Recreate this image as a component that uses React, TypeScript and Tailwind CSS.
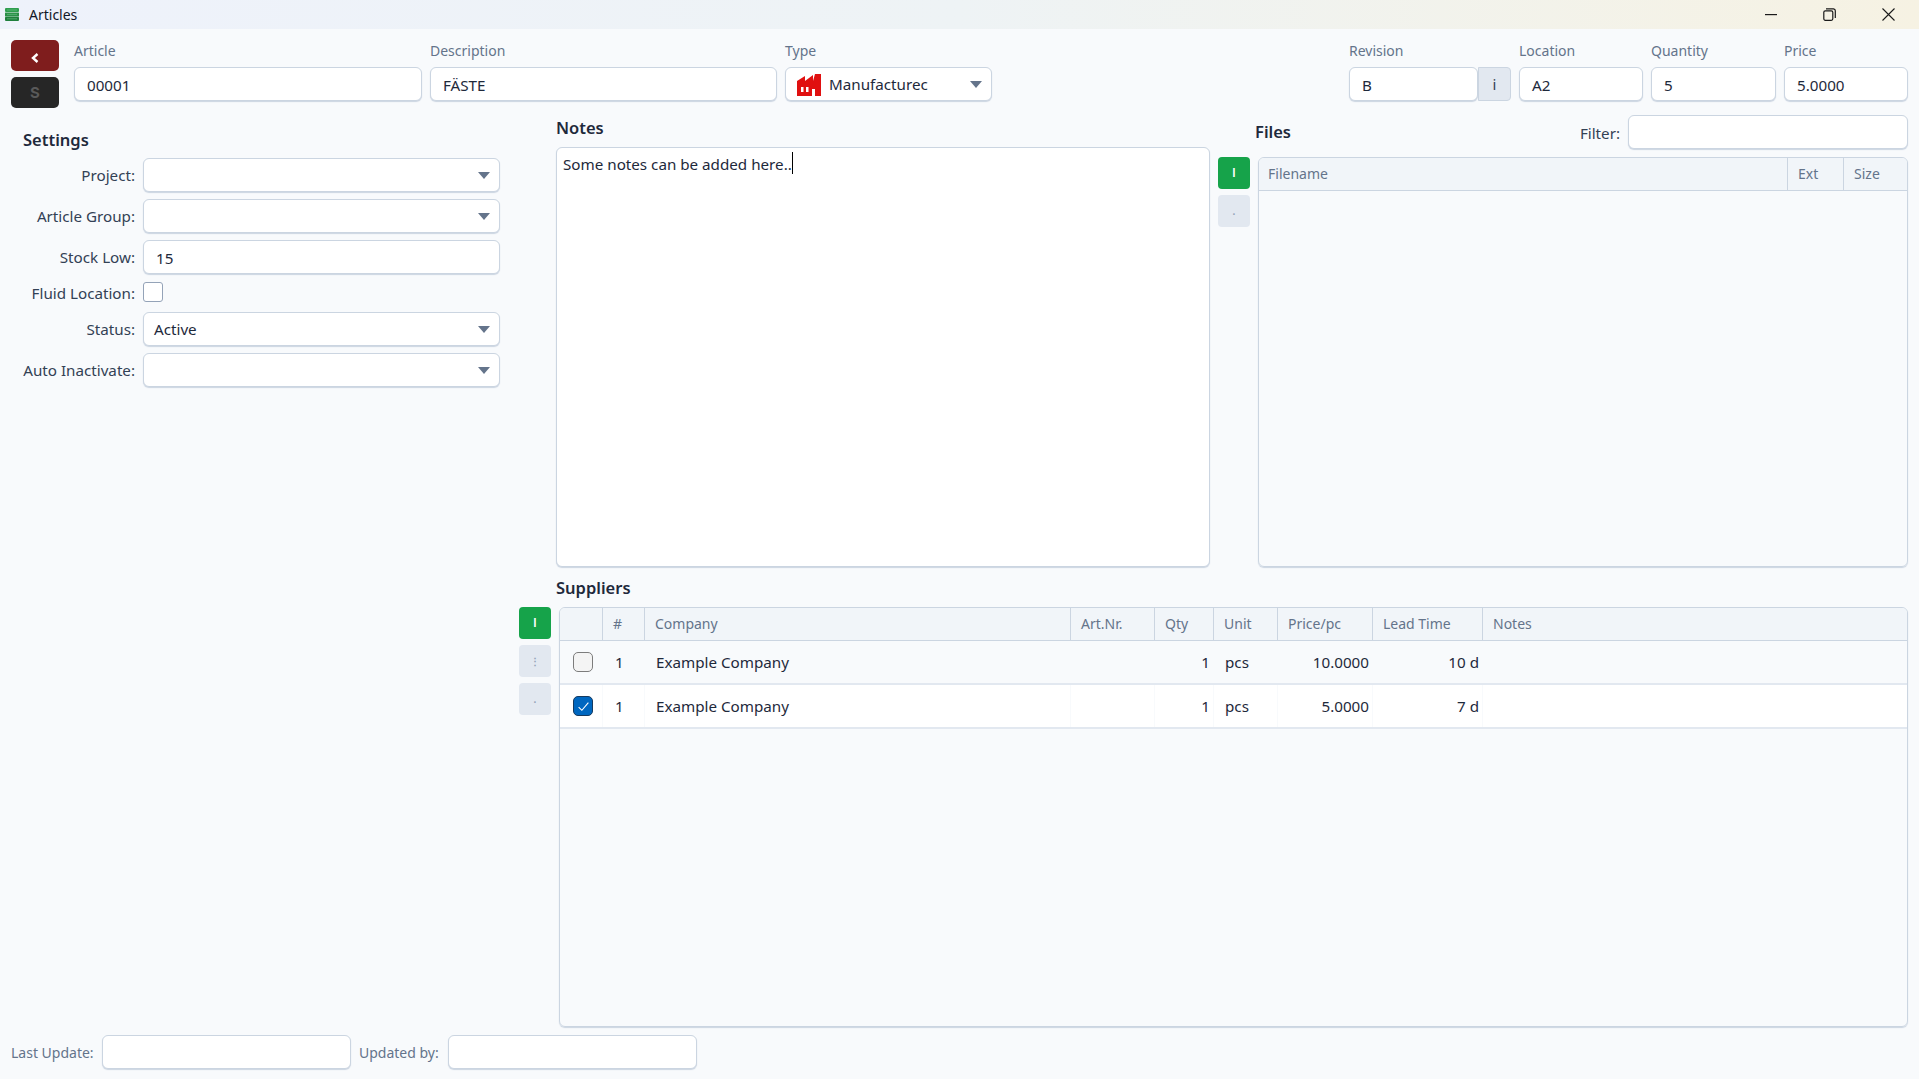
import React from "react";

const font = "font-['Noto_Sans',sans-serif]";

function Field({ value, className = "" }: { value?: string; className?: string }) {
  return (
    <div className={`flex h-[34px] items-center rounded-md border border-[#cbd5e1] bg-white pl-[12px] pt-[2px] text-[15.2px] text-[#1e293b] shadow-[0_1px_1px_#cbd5e1] ${className}`}>
      {value}
    </div>
  );
}

function Caret() {
  return <div className="ml-auto mr-[9px] h-0 w-0 border-x-[6.5px] border-t-[7px] border-x-transparent border-t-[#64748b]" />;
}

function Select({ value }: { value?: string }) {
  return (
    <div className="flex h-[34px] w-[357px] items-center rounded-md border border-[#cbd5e1] bg-white pl-[10px] text-[15.2px] text-[#1e293b] shadow-[0_1px_1px_#cbd5e1]">
      {value}
      <Caret />
    </div>
  );
}

function TopField({ label, value, className }: { label: string; value?: string; className: string }) {
  return (
    <div className={`flex flex-col ${className}`}>
      <div className="h-[27px] text-[14px] leading-[22px] text-[#64748b]">{label}</div>
      <Field value={value} />
    </div>
  );
}

function SettingRow({ label, children, className = "" }: { label: string; children: React.ReactNode; className?: string }) {
  return (
    <div className={`flex items-center ${className}`}>
      <div className="w-[135px] text-right text-[15.2px] text-[#334155]">{label}</div>
      <div className="ml-[8px]">{children}</div>
    </div>
  );
}

function SideButton({ text, green }: { text: string; green?: boolean }) {
  return (
    <div className={`flex h-[32px] w-[32px] items-center justify-center rounded-[4px] font-['Inter',sans-serif] ${green ? "bg-[#16a34a] text-[12px] font-semibold text-white" : "bg-[#e2e8f0] text-[10px] font-bold text-[#94a3b8]"}`}>
      {text}
    </div>
  );
}

function Th({ label, last, className = "pl-[10px]" }: { label?: string; last?: boolean; className?: string }) {
  return (
    <div className={`flex items-center pb-[1px] text-[14px] text-[#64748b] ${className} ${last ? "" : "border-r border-[#cbd5e1]"}`}>
      {label}
    </div>
  );
}

function Td({ children, right }: { children?: React.ReactNode; right?: boolean }) {
  return (
    <div className={`flex items-center border-r border-[#f8fafc] text-[15.2px] text-[#1e293b] ${right ? "justify-end pr-[3px]" : ""}`}>
      {children}
    </div>
  );
}

const supplierCols = "grid grid-cols-[43px_42px_426px_84px_59px_64px_95px_110px_1fr]";

function SupplierRow({ checked, price, lead }: { checked?: boolean; price: string; lead: string }) {
  return (
    <div className={`${supplierCols} h-[44px] border-b-2 border-[#e2e8f0] ${checked ? "bg-white" : ""}`}>
      <Td>
        {checked ? (
          <div className="ml-[13px] flex h-[20px] w-[20px] items-center justify-center rounded-[5px] border-[1.5px] border-[#163a5f] bg-[#0067c0]">
            <svg viewBox="0 0 12 12" className="h-[13px] w-[13px]">
              <path d="M1.5 6.5 L4.5 9.5 L10.5 2.5" fill="none" stroke="white" strokeWidth="1" />
            </svg>
          </div>
        ) : (
          <div className="ml-[13px] h-[20px] w-[20px] rounded-[5px] border-[1.5px] border-[#7c7c7c] bg-[#f4f4f4]" />
        )}
      </Td>
      <Td><span className="pl-[12px]">1</span></Td>
      <Td><span className="pl-[11px]">Example Company</span></Td>
      <Td />
      <Td right>1</Td>
      <Td><span className="pl-[11px]">pcs</span></Td>
      <Td right>{price}</Td>
      <Td right>{lead}</Td>
      <div />
    </div>
  );
}

export default function App() {
  return (
    <div className={`flex h-[1079px] w-[1919px] flex-col overflow-hidden bg-[#f8fafc] ${font}`}>
      {/* title bar */}
      <div className="flex h-[29px] items-center bg-gradient-to-r from-[#eef2fb] via-[#eef3f5] to-[#f6f2e3]">
        <svg viewBox="0 0 14 13" className="ml-[5px] h-[13px] w-[14px]">
          <rect x="0" y="0" width="14" height="4.1" rx="1" fill="#2f9e4f" />
          <rect x="0" y="4.4" width="14" height="4.1" rx="0.5" fill="#2a8f47" />
          <rect x="0" y="8.8" width="14" height="4.1" rx="1" fill="#1f7f3c" />
          <path d="M2 2 H12 M2 6.4 H12 M2 10.8 H12" stroke="#6cc48a" strokeWidth="0.6" />
        </svg>
        <div className="ml-[10px] text-[14px] text-[#111827]">Articles</div>
        <svg viewBox="0 0 12 2" className="ml-auto h-[2px] w-[12px]">
          <rect width="12" height="1.2" fill="#1a1a1a" />
        </svg>
        <svg viewBox="0 0 13 13" className="ml-[46px] h-[13px] w-[13px]" fill="none" stroke="#1a1a1a" strokeWidth="1.2">
          <rect x="0.8" y="2.8" width="9" height="9.5" rx="1.5" />
          <path d="M3 0.8 H10.5 A2 2 0 0 1 12.3 2.8 V10" />
        </svg>
        <svg viewBox="0 0 13 13" className="ml-[46px] mr-[24px] h-[13px] w-[13px]" stroke="#1a1a1a" strokeWidth="1.1">
          <path d="M0.5 0.5 L12.5 12.5 M12.5 0.5 L0.5 12.5" />
        </svg>
      </div>

      {/* article header */}
      <div className="flex h-[79px] pl-[11px] pt-[11px]">
        <div className="flex w-[48px] flex-col gap-[6px]">
          <div className="flex h-[31px] items-center justify-center rounded-[5px] bg-[#7f1d1d]">
            <svg viewBox="0 0 8 10" className="mt-[4px] h-[10px] w-[8px]">
              <path d="M6.5 1 L2 5 L6.5 9" fill="none" stroke="white" strokeWidth="2.4" />
            </svg>
          </div>
          <div className="flex h-[31px] items-center justify-center rounded-[5px] bg-[#262626] pt-[2px] font-['Inter',sans-serif] text-[15px] font-bold text-[#595959]">S</div>
        </div>
        <TopField label="Article" value="00001" className="ml-[15px] w-[348px]" />
        <TopField label="Description" value="FÄSTE" className="ml-[8px] w-[347px]" />
        <div className="ml-[8px] flex w-[207px] flex-col">
          <div className="h-[27px] text-[14px] leading-[22px] text-[#64748b]">Type</div>
          <div className="flex h-[34px] items-center rounded-md border border-[#cbd5e1] bg-white pl-[11px] text-[15.2px] text-[#1e293b] shadow-[0_1px_1px_#cbd5e1]">
            <svg viewBox="0 0 24 22" className="mt-[1px] h-[22px] w-[24px]">
              <path fillRule="evenodd" fill="#e01010" d="M0 22 V7 L8 2 V7 L16 1 V7 L18 0 H24 V22 H18 V15 H15 V22 Z M4 13 V18 H6.5 V13 Z M9 13 V18 H11.5 V13 Z" />
            </svg>
            <span className="ml-[8px] whitespace-nowrap">Manufacturec</span>
            <Caret />
          </div>
        </div>
        <div className="ml-[357px] flex w-[129px] flex-col">
          <div className="h-[27px] text-[14px] leading-[22px] text-[#64748b]">Revision</div>
          <Field value="B" />
        </div>
        <div className="mt-[27px] flex h-[34px] w-[33px] items-center justify-center rounded-r-[4px] border border-[#cbd5e1] bg-[#e2e8f0] text-[15px] text-[#334155]">i</div>
        <TopField label="Location" value="A2" className="ml-[8px] w-[124px]" />
        <TopField label="Quantity" value="5" className="ml-[8px] w-[125px]" />
        <TopField label="Price" value="5.0000" className="ml-[8px] w-[124px]" />
      </div>

      <div className="flex min-h-0 flex-1">
        {/* settings */}
        <div className="flex w-[519px] flex-col">
          <div className="ml-[23px] mt-[20px] h-[30px] text-[16.5px] font-semibold leading-[24px] text-[#1e293b]">Settings</div>
          <div className="flex flex-col gap-[7px]">
            <SettingRow label="Project:"><Select /></SettingRow>
            <SettingRow label="Article Group:"><Select /></SettingRow>
            <SettingRow label="Stock Low:"><Field value="15" className="w-[357px]" /></SettingRow>
            <SettingRow label="Fluid Location:" className="h-[24px]">
              <div className="mb-[2px] h-[20px] w-[20px] rounded-[3px] border border-[#94a3b8] bg-white" />
            </SettingRow>
            <SettingRow label="Status:"><Select value="Active" /></SettingRow>
            <SettingRow label="Auto Inactivate:"><Select /></SettingRow>
          </div>
        </div>

        <div className="flex min-w-0 flex-1 flex-col pr-[11px]">
          {/* notes and files */}
          <div className="flex h-[459px]">
            <div className="ml-[37px] flex w-[654px] flex-col">
              <div className="h-[39px] pt-[7px] text-[16.5px] font-semibold leading-[26px] text-[#1e293b]">Notes</div>
              <div className="flex flex-1 items-start rounded-md border border-[#cbd5e1] bg-white pl-[6px] pt-[4px] text-[15.2px] leading-[24px] text-[#1e293b] shadow-[0_1px_1px_#cbd5e1]">
                Some notes can be added here..
                <div className="h-[22px] w-[1.5px] bg-black" />
              </div>
            </div>
            <div className="ml-[8px] mt-[49px] flex flex-col gap-[6px]">
              <SideButton text="I" green />
              <SideButton text="." />
            </div>
            <div className="ml-[5px] flex flex-1 flex-col">
              <div className="mt-[7px] flex h-[34px] items-center">
                <div className="text-[16.5px] font-semibold text-[#1e293b]">Files</div>
                <div className="ml-auto pt-[2px] text-[15.2px] text-[#334155]">Filter:</div>
                <Field className="ml-[8px] w-[280px]" />
              </div>
              <div className="ml-[3px] mt-[8px] flex flex-1 flex-col overflow-hidden rounded-md border border-[#cbd5e1] shadow-[0_1px_1px_#cbd5e1]">
                <div className="grid h-[33px] grid-cols-[529px_56px_1fr] border-b border-[#cbd5e1] bg-[#f1f5f9]">
                  <Th label="Filename" className="pl-[9px]" />
                  <Th label="Ext" />
                  <Th label="Size" last />
                </div>
              </div>
            </div>
          </div>

          {/* suppliers */}
          <div className="ml-[37px] mt-[4px] flex h-[36px] items-center pb-[2px] text-[16.5px] font-semibold text-[#1e293b]">Suppliers</div>
          <div className="flex h-[420px]">
            <div className="flex w-[40px] flex-col gap-[6px]">
              <SideButton text="I" green />
              <SideButton text="⋮" />
              <SideButton text="." />
            </div>
            <div className="flex flex-1 flex-col overflow-hidden rounded-md border border-[#cbd5e1] shadow-[0_1px_1px_#cbd5e1]">
              <div className={`${supplierCols} h-[33px] border-b border-[#cbd5e1] bg-[#f1f5f9]`}>
                <Th />
                <Th label="#" />
                <Th label="Company" />
                <Th label="Art.Nr." />
                <Th label="Qty" />
                <Th label="Unit" />
                <Th label="Price/pc" />
                <Th label="Lead Time" />
                <Th label="Notes" last />
              </div>
              <SupplierRow price="10.0000" lead="10 d" />
              <SupplierRow checked price="5.0000" lead="7 d" />
            </div>
          </div>
        </div>
      </div>

      {/* footer */}
      <div className="flex h-[44px] items-start pl-[11px] text-[14px] text-[#64748b]">
        <div className="flex h-[34px] w-[91px] items-center">Last Update:</div>
        <Field className="w-[249px]" />
        <div className="ml-[8px] flex h-[34px] w-[89px] items-center">Updated by:</div>
        <Field className="w-[249px]" />
      </div>
    </div>
  );
}
